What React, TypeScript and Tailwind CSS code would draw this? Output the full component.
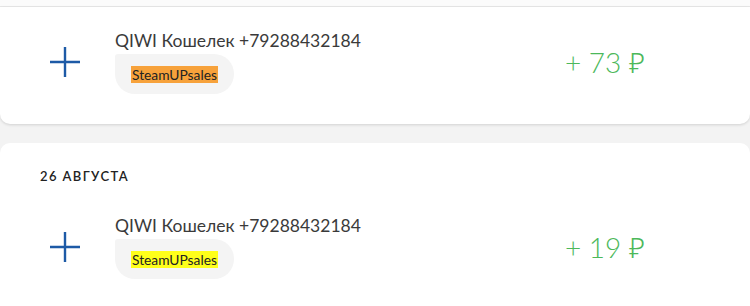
import React from "react";

type Tx = {
  title: string;
  tag: string;
  tagColor: string;
  amount: string;
};

const PlusIcon = () => (
  <svg width="32" height="32" viewBox="0 0 32 32" className="shrink-0">
    <path d="M16 1v30M1 16h30" stroke="#1d5aa6" strokeWidth="2.4" fill="none" />
  </svg>
);

const Row = ({ tx }: { tx: Tx }) => (
  <div className="flex items-center">
    <div className="w-[115px] pl-[49px] flex items-center">
      <PlusIcon />
    </div>
    <div className="flex flex-col">
      <div className="text-[17.5px] leading-[24px] text-[#3a3a3a]">{tx.title}</div>
      <div className="mt-[1px] self-start bg-[#f4f4f4] rounded-[20px] rounded-tl-[3px] px-[16px] py-[12px] leading-[16px]">
        <span className="text-[13.8px] leading-[15px] text-[#222] px-[1px]" style={{ backgroundColor: tx.tagColor }}>
          {tx.tag}
        </span>
      </div>
    </div>
    <div className="ml-auto mr-[105px] text-[28px] font-light text-[#4cb85a] whitespace-nowrap">
      {tx.amount}
    </div>
  </div>
);

export default function App() {
  return (
    <div className="w-[750px] h-[306px] overflow-hidden bg-[#f3f3f3] font-['Lato','Noto_Sans',sans-serif]">
      <div className="h-[7px] bg-[#fbfbfb] border-b border-[#e8e8e8]" />
      <div className="bg-white rounded-b-[10px] shadow-[0_1px_3px_rgba(0,0,0,0.14)] pt-[22px] pb-[30px]">
        <Row tx={{ title: "QIWI Кошелек +79288432184", tag: "SteamUPsales", tagColor: "#f7a23b", amount: "+ 73 ₽" }} />
      </div>
      <div className="mt-[19px] bg-white rounded-t-[10px] pt-[26px] pb-[30px]">
        <div className="pl-[40px] text-[13px] font-semibold tracking-[1.4px] text-[#222] leading-[14px]">26 АВГУСТА</div>
        <div className="mt-[31px]">
          <Row tx={{ title: "QIWI Кошелек +79288432184", tag: "SteamUPsales", tagColor: "#ffff1a", amount: "+ 19 ₽" }} />
        </div>
      </div>
    </div>
  );
}
